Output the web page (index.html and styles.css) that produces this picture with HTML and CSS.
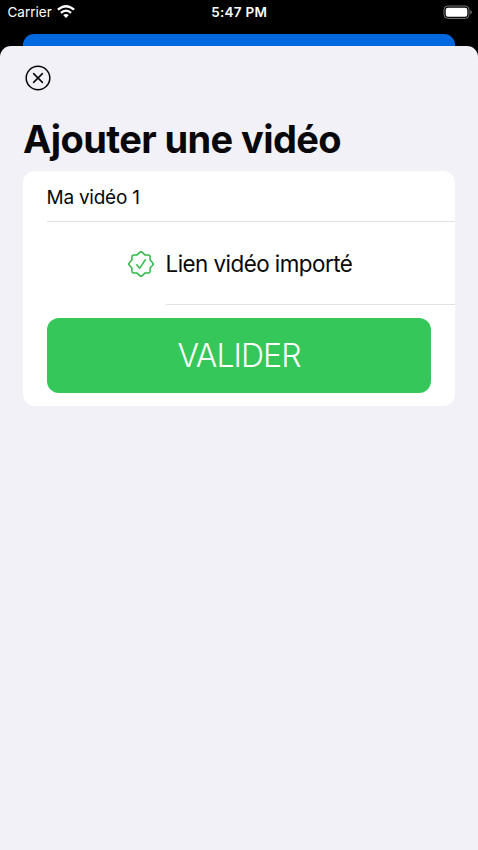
FILE: index.html
```html
<!DOCTYPE html>
<html lang="fr">
<head>
<meta charset="utf-8">
<title>Ajouter une vidéo</title>
<link rel="stylesheet" href="styles.css">
</head>
<body>
<header class="status">
  <div class="carrier"><span class="carrier-name">Carrier</span>
    <svg class="wifi" viewBox="0 0 18 13" width="18" height="13">
      <path d="M9 12.9 6.2 10Q9 7.8 11.8 10Z" fill="#fff"/>
      <path d="M3.9 7.8Q9 3.4 14.1 7.8M.9 4.7Q9-2.3 17.1 4.7" fill="none" stroke="#fff" stroke-width="2.3"/>
    </svg>
  </div>
  <time class="time">5:47 PM</time>
  <svg class="battery" viewBox="0 0 30 15" width="30" height="15">
    <rect x="1" y="1" width="25" height="12.4" rx="3.8" fill="none" stroke="#777" stroke-width="1"/>
    <rect x="2.7" y="2.7" width="21.6" height="9" rx="2.2" fill="#fff"/>
    <path d="M27.4 5.1Q28.8 5.8 28.8 7.2T27.4 9.3Z" fill="#777"/>
  </svg>
</header>
<div class="behind"></div>
<main class="sheet">
  <button class="close" aria-label="Fermer">
    <svg viewBox="0 0 26 26" width="26" height="26" fill="none" stroke="#050507" stroke-width="1.5" stroke-linecap="round">
      <circle cx="13" cy="13" r="11.8"/>
      <path d="m8.6 8.6 8.8 8.8m0-8.8-8.8 8.8"/>
    </svg>
  </button>
  <h1 class="title"><span>Ajouter une vidéo</span></h1>
  <section class="card">
    <div class="row name"><span class="name-text">Ma vidéo 1</span></div>
    <div class="row link">
      <svg class="seal" viewBox="-13 -13 26 26" width="26" height="26" fill="none" stroke="#2fb846" stroke-width="1.5" stroke-linecap="round" stroke-linejoin="round">
        <path d="M-1.3-11.6Q0-12.9 1.3-11.6L3.9-9.1 7.1-9.1Q9.1-9.1 9.1-7.1L9.1-3.9 11.6-1.3Q12.9 0 11.6 1.3L9.1 3.9 9.1 7.1Q9.1 9.1 7.1 9.1L3.9 9.1 1.3 11.6Q0 12.9-1.3 11.6L-3.9 9.1-7.1 9.1Q-9.1 9.1-9.1 7.1L-9.1 3.9-11.6 1.3Q-12.9 0-11.6-1.3L-9.1-3.9-9.1-7.1Q-9.1-9.1-7.1-9.1L-3.9-9.1Z"/>
        <path d="M-4.3.8-1.2 4.2 4.4-4.3"/>
      </svg>
      <span class="link-text">Lien vidéo importé</span>
    </div>
    <button class="validate"><span>VALIDER</span></button>
  </section>
</main>
</body>
</html>
```
FILE: styles.css
```css
* { box-sizing: border-box; }
body {
  margin: 0;
  height: 850px;
  display: flex;
  flex-direction: column;
  overflow: hidden;
  background: #000;
  color: #08080b;
  font-family: Inter, "Liberation Sans", sans-serif;
}
button { border: 0; padding: 0; font: inherit; }
svg { display: block; flex: none; }
.status {
  height: 34px;
  flex: none;
  padding: 4px 5px 0 7.5px;
  display: grid;
  grid-template-columns: 1fr auto 1fr;
  align-items: start;
  color: #fff;
}
.carrier { display: flex; gap: 5.5px; height: 17px; align-items: center; }
.carrier-name { font-size: 13.5px; line-height: 17px; }
.wifi { margin-top: -2px; }
.time { margin-left: -2px; font-size: 13.5px; line-height: 17px; font-weight: 600; letter-spacing: 0.25px; }
.battery { justify-self: end; margin-top: 1px; }
.behind {
  height: 12px;
  flex: none;
  margin: 0 23px;
  background: #0069e0;
  border-radius: 11px 11px 0 0;
}
.sheet {
  flex: 1;
  padding: 19px 23px 0;
  background: #f2f1f7;
  border-radius: 11px 11px 0 0;
}
.close { display: block; margin-left: 2px; background: none; }
.title {
  margin: 24px 0 8px;
  height: 48px;
  font-size: 38px;
  line-height: 48px;
  font-weight: 700;
  letter-spacing: -0.6px;
  white-space: nowrap;
}
.card {
  height: 235px;
  padding-left: 24px;
  background: #fff;
  border-radius: 12px;
}
.row { display: flex; align-items: center; }
.name { height: 51px; padding-top: 2px; border-bottom: 1px solid #e2e2e5; }
.name-text { font-size: 19px; font-weight: 380; letter-spacing: -0.25px; margin-left: -0.5px; }
.link { height: 83px; padding-left: 81px; gap: 12px; }
.link-text {
  flex: 1;
  height: 83px;
  line-height: 83px;
  font-size: 22.4px;
  font-weight: 380;
  letter-spacing: -0.53px;
  text-indent: -0.5px;
  border-bottom: 1px solid #e2e2e5;
  white-space: nowrap;
}
.validate {
  display: block;
  width: 384px;
  height: 75px;
  margin-top: 13px;
  border-radius: 12px;
  background: #35c759;
  color: #fff;
  font-size: 32px;
  font-weight: 360;
  letter-spacing: -0.95px;
}
```
